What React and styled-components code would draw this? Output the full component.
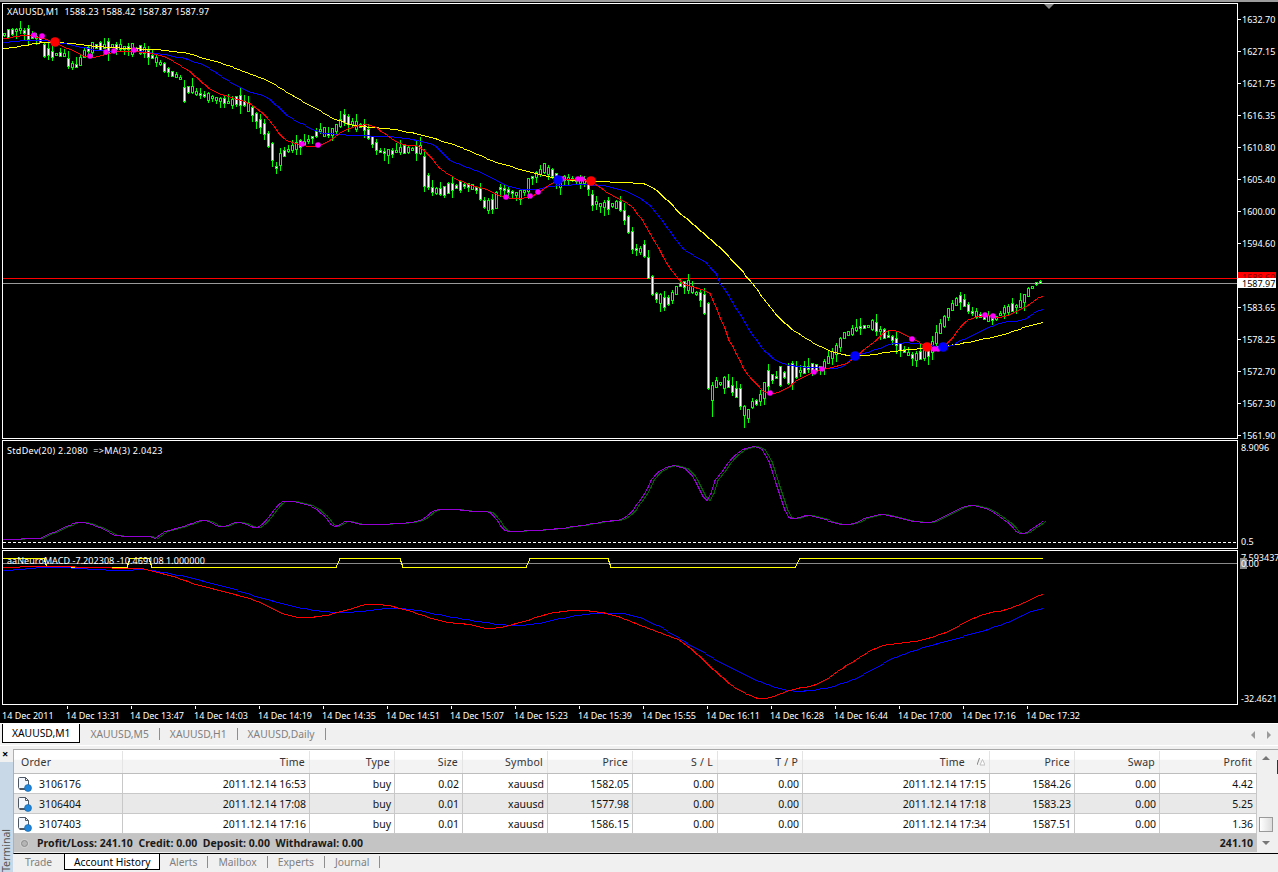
import React from 'react';
import styled, { createGlobalStyle } from 'styled-components';

const GlobalStyle = createGlobalStyle`
  html, body {
    margin: 0;
    padding: 0;
    background: #f0f0f0;
  }
  body {
    font-family: "Noto Sans", "Liberation Sans", sans-serif;
    font-size: 10.5px;
    overflow: hidden;
  }
`;

const Page = styled.div`
  width: 1278px;
  height: 872px;
  display: flex;
  flex-direction: column;
  overflow: hidden;
`;

const ChartWindow = styled.div`
  height: 723px;
  flex: none;
  box-sizing: border-box;
  background: #000;
  border-top: 2px solid #9c9c9c;
  padding: 1px 0 0 2px;
  display: flex;
  flex-direction: column;
  gap: 1px;
  color: #fff;
  font-size: 9px;
`;

const Pane = styled.div`
  display: flex;
  height: ${(p) => p.$height}px;
  flex: none;
`;

const Plot = styled.div`
  position: relative;
  width: 1236px;
  box-sizing: border-box;
  border: 1px solid #fff;
  flex: none;
  svg {
    display: block;
  }
`;

const ChartTitle = styled.div`
  position: absolute;
  left: 4px;
  top: ${(p) => p.$top}px;
  line-height: 12px;
  white-space: pre;
  letter-spacing: ${(p) => p.$tracking}px;
`;

const PriceAxis = styled.div`
  position: relative;
  flex: 1;
`;

const PriceRow = styled.div`
  height: 32px;
  display: flex;
  align-items: center;
  gap: 1px;
  &::before {
    content: '';
    width: 3px;
    height: 1px;
    background: #fff;
  }
`;

const PriceTag = styled.div`
  position: absolute;
  left: 0;
  width: 38px;
  top: ${(p) => p.$top}px;
  height: ${(p) => p.$height}px;
  line-height: 11px;
  padding-left: 4px;
  box-sizing: border-box;
  overflow: hidden;
  background: ${(p) => p.$bg};
  color: ${(p) => p.$color};
`;

const ScaleAxis = styled.div`
  position: relative;
  flex: 1;
  display: flex;
  flex-direction: column;
  justify-content: space-between;
  padding: ${(p) => p.$pad};
  line-height: 11px;
  white-space: nowrap;
  overflow: hidden;
  padding-left: 3px;
`;

const ZeroTag = styled.span`
  position: absolute;
  left: 2px;
  top: 8px;
  line-height: 11px;
  padding-left: 1px;
  background: linear-gradient(90deg, #8a8a8a 7px, transparent 7px);
`;

const TimeAxis = styled.div`
  display: flex;
  height: 17px;
  flex: none;
`;

const TimeCell = styled.div`
  width: 64px;
  flex: none;
  white-space: nowrap;
  line-height: 12px;
  &::before {
    content: '';
    display: block;
    width: 1px;
    height: 3px;
    margin-left: 1px;
    margin-bottom: 1px;
    background: ${(p) => (p.$first ? 'transparent' : '#fff')};
  }
`;

const ChartTabs = styled.div`
  height: 23px;
  flex: none;
  box-sizing: border-box;
  border-top: 1px solid #fff;
  border-bottom: 1px solid #fff;
  background: #f0f0f0;
  display: flex;
  align-items: stretch;
  padding-left: 2px;
  font-size: 10.3px;
`;

const ChartTab = styled.div`
  display: flex;
  align-items: center;
  gap: 10px;
  padding: 0 0 0 10px;
  color: #808080;
  margin-bottom: 2px;
  &::after {
    content: '';
    width: 1px;
    height: 12px;
    background: #8e8e8e;
  }
  ${(p) =>
    p.$active &&
    `
    background: #fff;
    color: #000;
    padding: 0 9px;
    border-left: 1px solid #000;
    border-right: 1px solid #000;
    border-bottom: 1px solid #000;
    margin-bottom: 2px;
    &::after { display: none; }
  `}
`;

const Arrows = styled.div`
  margin-left: auto;
  display: flex;
  align-items: center;
  gap: 12px;
  padding-right: 7px;
`;

const Terminal = styled.div`
  flex: 1;
  display: flex;
  min-height: 0;
`;

const SideStrip = styled.div`
  width: 13px;
  flex: none;
  display: flex;
  flex-direction: column;
  margin-top: 2px;
`;

const CloseMark = styled.div`
  height: 14px;
  font-size: 11px;
  font-weight: 700;
  line-height: 11px;
  padding-left: 2px;
  color: #000;
  flex: none;
`;

const SideLabel = styled.div`
  flex: 1;
  background: #c8d8e6;
  color: #555;
  writing-mode: vertical-rl;
  transform: rotate(180deg);
  text-align: left;
  line-height: 13px;
  font-size: 10.5px;
`;

const Body = styled.div`
  position: relative;
  flex: 1;
  display: flex;
  flex-direction: column;
  padding-top: 3px;
  min-width: 0;
  &::after {
    content: '';
    position: absolute;
    right: 0;
    top: 14px;
    width: 1px;
    height: 14px;
    background: #333;
  }
`;

const TableArea = styled.div`
  display: flex;
  height: 103px;
  flex: none;
  border-top: 1px solid #a8a8a8;
  border-left: 1px solid #b0b0b0;
  border-bottom: 1px solid #000;
`;

const Table = styled.div`
  width: 1243px;
  flex: none;
`;

const columns = '109px 187px 85px 68px 85px 85px 85px 85px 187px 85px 85px 97px';

const HeaderRow = styled.div`
  display: grid;
  grid-template-columns: ${columns};
  height: 22px;
  padding-top: 1px;
  background: linear-gradient(#fff 0, #fff 40%, #f3f3f3 45%, #f3f3f3 100%);
  border-bottom: 1px solid #bdbdbd;
  box-shadow: 0 1px 0 #fff, 0 2px 0 #c8c8c8;
  color: #333;
  margin-bottom: 0;
  box-sizing: content-box;
`;

const HeaderCell = styled.div`
  display: flex;
  align-items: center;
  justify-content: ${(p) => (p.$left ? 'flex-start' : 'flex-end')};
  gap: 12px;
  padding: ${(p) => (p.$left ? '0 0 0 7px' : '0 4px 0 0')};
  border-right: 1px solid #e4e4e4;
  letter-spacing: 0.25px;
`;

const Row = styled.div`
  display: grid;
  grid-template-columns: ${columns};
  height: 20px;
  box-sizing: border-box;
  background: ${(p) => (p.$alt ? '#e9e9e9' : '#fff')};
  border-bottom: 1px solid #c8c8c8;
  color: #111;
`;

const Cell = styled.div`
  display: flex;
  align-items: center;
  justify-content: flex-end;
  padding-right: 3px;
  margin-left: -1px;
  border-right: 1px solid #c8c8c8;
  white-space: nowrap;
`;

const OrderCell = styled(Cell)`
  justify-content: flex-start;
  gap: 7px;
  padding-left: 3px;
  margin-left: 0;
`;

const Summary = styled.div`
  height: 18px;
  background: #c4c4c4;
  display: flex;
  align-items: center;
  font-weight: 700;
  color: #1a1a1a;
  white-space: pre;
  padding: 0 4px 0 7px;
  gap: 9px;
  letter-spacing: 0.03px;
`;

const SummaryTotal = styled.span`
  margin-left: auto;
`;

const StatusDot = styled.span`
  width: 5px;
  height: 5px;
  border-radius: 50%;
  background: #b5b5b5;
  border: 1px solid #8a8a8a;
  box-shadow: 0 0 0 1px #d0d0d0;
`;

const Scrollbar = styled.div`
  width: 18px;
  flex: none;
  background: #f0f0f0;
  display: flex;
  flex-direction: column;
  align-items: center;
  padding-top: 6px;
  box-sizing: border-box;
`;

const Thumb = styled.div`
  width: 14px;
  height: 15px;
  margin-top: 57px;
  margin-bottom: 9px;
  box-sizing: border-box;
  border: 1px solid #9a9a9a;
  background: linear-gradient(90deg, #fff, #dcdcdc);
`;

const BottomTabs = styled.div`
  flex: 1;
  display: flex;
  align-items: stretch;
  background: #f0f0f0;
  padding-left: 1px;
  font-size: 10.3px;
`;

const BottomTab = styled(ChartTab)`
  ${(p) => p.$plain && `width: 50px; box-sizing: border-box; padding-left: 11px; &::after { display: none; }`}
  ${(p) => p.$active && `padding-right: 8px;`}
`;

// control points read off the chart, in page pixels
const pricePath = [
  [3, 35], [12, 32], [19, 29], [26, 33], [35, 37], [43, 42], [44, 50], [52, 54], [66, 55], [68, 62],
  [75, 67], [80, 62], [84, 55], [90, 48], [100, 46], [118, 47], [145, 50], [150, 55], [160, 63], [170, 72],
  [183, 80], [184, 95], [190, 88], [200, 95], [213, 98], [230, 103], [240, 100], [250, 108], [257, 118], [265, 130],
  [272, 150], [277, 170], [282, 155], [290, 150], [298, 145], [305, 143], [312, 138], [320, 130], [330, 135], [345, 118],
  [355, 125], [365, 128], [372, 140], [380, 152], [390, 153], [400, 150], [423, 150], [424, 170], [432, 190], [442, 192],
  [450, 188], [470, 185], [480, 192], [485, 205], [495, 205], [500, 188], [520, 195], [527, 190], [530, 180], [545, 168],
  [555, 175], [560, 185], [565, 178], [585, 182], [590, 185], [592, 200], [600, 205], [620, 205], [623, 212], [628, 222],
  [635, 250], [645, 250], [650, 275], [655, 295], [665, 303], [670, 300], [680, 285], [688, 285], [695, 292], [703, 298],
  [707, 315], [711, 398], [715, 385], [727, 382], [735, 392], [740, 395], [743, 410], [748, 415], [752, 405], [757, 402],
  [763, 395], [768, 378], [775, 378], [785, 375], [795, 373], [810, 368], [822, 368], [835, 352], [845, 335], [860, 328],
  [875, 325], [885, 335], [895, 340], [905, 352], [915, 358], [930, 352], [940, 330], [950, 310], [960, 298], [972, 312],
  [985, 318], [995, 320], [1005, 310], [1020, 305], [1030, 290], [1037, 283], [1043, 282],
];

const yellowLine = [
  [3, 48], [50, 42], [110, 47], [167, 50], [200, 57], [267, 80], [320, 110], [350, 124], [400, 130], [450, 143],
  [500, 163], [560, 178], [620, 182], [650, 186], [680, 213], [720, 247], [750, 280], [780, 318], [810, 340], [835, 352],
  [860, 355], [900, 350], [950, 345], [1000, 335], [1043, 322],
];

const blueLine = [
  [3, 42], [30, 40], [50, 41], [100, 50], [150, 52], [200, 63], [240, 87], [267, 97], [287, 115], [320, 132],
  [400, 137], [433, 144], [450, 160], [483, 173], [510, 186], [533, 189], [557, 185], [600, 185], [627, 191], [650, 205],
  [667, 227], [683, 248], [707, 263], [720, 283], [757, 340], [780, 362], [813, 367], [840, 367], [855, 356], [880, 348],
  [893, 343], [920, 343], [943, 347], [960, 340], [1000, 323], [1020, 320], [1043, 309],
];

const redLine = [
  [3, 38], [30, 35], [55, 42], [67, 48], [90, 57], [113, 52], [133, 51], [160, 55], [183, 67], [213, 90],
  [250, 103], [267, 117], [283, 137], [300, 144], [320, 145], [345, 130], [370, 125], [400, 143], [420, 147], [443, 170],
  [467, 183], [483, 188], [507, 197], [530, 197], [538, 192], [558, 180], [590, 181], [607, 192], [633, 207], [650, 233],
  [667, 263], [683, 283], [710, 293], [720, 317], [729, 340], [747, 373], [770, 393], [813, 372], [847, 363], [867, 347],
  [890, 330], [910, 337], [930, 347], [945, 345], [965, 322], [985, 315], [1000, 317], [1020, 309], [1043, 296],
];

const smallDots = [
  [34, 35], [42, 36], [90, 56], [106, 52], [114, 51], [134, 50], [302, 144], [318, 145], [506, 197], [530, 196],
  [538, 192], [562, 179], [578, 179], [582, 179], [770, 393], [814, 372], [822, 369], [912, 339], [934, 349], [938, 349],
  [985, 315], [993, 316],
];
const bigRed = [[55, 42], [591, 181], [927, 347]];
const bigBlue = [[558, 180], [855, 356], [943, 347]];

const stdDevLine = [
  [3, 539], [40, 538], [42, 537], [50, 533], [70, 525], [80, 522], [100, 527], [115, 535], [150, 536], [155, 538],
  [165, 531], [180, 527], [205, 520], [220, 526], [240, 522], [258, 527], [270, 515], [280, 503], [290, 501], [310, 505],
  [320, 512], [335, 526], [345, 521], [365, 524], [400, 523], [420, 520], [435, 510], [450, 509], [475, 511], [490, 512],
  [505, 530], [530, 530], [560, 528], [600, 522], [625, 517], [640, 500], [655, 475], [670, 466], [685, 468], [695, 480],
  [707, 500], [715, 480], [735, 455], [750, 447], [762, 449], [772, 470], [785, 510], [792, 518], [810, 515], [845, 524],
  [880, 514], [905, 519], [930, 522], [950, 513], [970, 505], [990, 510], [1005, 520], [1020, 533], [1030, 530], [1043, 521],
];

const macdRed = [
  [3, 567], [45, 566], [130, 568], [150, 570], [200, 585], [250, 598], [290, 615], [320, 616], [345, 610], [370, 604],
  [400, 608], [440, 620], [470, 624], [490, 628], [520, 622], [550, 613], [580, 610], [610, 614], [640, 625], [680, 640],
  [700, 656], [720, 675], [740, 690], [762, 698], [790, 690], [820, 682], [850, 663], [880, 646], [920, 640], [950, 630],
  [980, 615], [1010, 608], [1043, 594],
];

const macdBlue = [
  [3, 570], [50, 567], [120, 570], [150, 570], [220, 585], [290, 605], [340, 612], [400, 608], [460, 618], [520, 625],
  [580, 615], [620, 613], [650, 622], [700, 650], [740, 672], [780, 688], [810, 690], [850, 680], [900, 655], [950, 640],
  [1000, 625], [1043, 608],
];

const macdSteps = [
  [3, 558], [44, 558], [47, 567], [127, 567], [130, 558], [149, 558], [152, 567], [336, 567], [340, 558], [400, 558],
  [403, 567], [526, 567], [530, 558], [608, 558], [611, 567], [795, 567], [800, 558], [1043, 558],
];

const smooth = (line) => {
  const out = [];
  for (let i = 0; i < line.length - 1; i += 1) {
    const p0 = line[Math.max(i - 1, 0)];
    const p1 = line[i];
    const p2 = line[i + 1];
    const p3 = line[Math.min(i + 2, line.length - 1)];
    const steps = Math.max(1, Math.round((p2[0] - p1[0]) / 4));
    for (let s = 0; s < steps; s += 1) {
      const t = s / steps;
      const y =
        0.5 *
        (2 * p1[1] +
          (p2[1] - p0[1]) * t +
          (2 * p0[1] - 5 * p1[1] + 4 * p2[1] - p3[1]) * t * t +
          (3 * p1[1] - p0[1] - 3 * p2[1] + p3[1]) * t * t * t);
      out.push([Math.round(p1[0] + (p2[0] - p1[0]) * t), Math.round(y)]);
    }
  }
  out.push(line[line.length - 1]);
  return out;
};

const toPoints = (line, dx = 0) => line.map(([x, y]) => `${x + dx},${y + 0.5}`).join(' ');

const yAt = (x) => {
  for (let i = 1; i < pricePath.length; i += 1) {
    const [x1, y1] = pricePath[i];
    if (x <= x1) {
      const [x0, y0] = pricePath[i - 1];
      return y0 + ((y1 - y0) * (x - x0)) / (x1 - x0);
    }
  }
  return pricePath[pricePath.length - 1][1];
};

const noise = (i, k) => {
  const v = Math.sin(i * 12.9898 + k * 78.233) * 43758.5453;
  return v - Math.floor(v);
};

const makeCandles = () => {
  const bars = [];
  for (let i = 0; i * 4 + 3 <= 1040; i += 1) {
    const x = i * 4 + 3;
    const mid = yAt(x + 1.5);
    const slope = yAt(x + 4) - yAt(x);
    const wild = x > 710 && x < 800 ? 2 : 1;
    let size = 3 + noise(i, 4) * noise(i, 4) * 9 * wild;
    let down = noise(i, 1) > 0.5;
    if (Math.abs(slope) > 4) {
      size = Math.abs(slope) + 3;
      down = slope > 0;
    }
    if (x > 1030) size = 3;
    const top = Math.round(mid - size / 2);
    const height = Math.round(size);
    const tail = x > 1030 ? 1 : 8;
    let high = top - Math.round(noise(i, 2) * noise(i, 2) * tail);
    let low = top + height + Math.round(noise(i, 3) * noise(i, 3) * tail);
    if (x === 743) low = 428;
    if (x === 711) low = 417;
    bars.push({ x, top, height, high, low, down });
  }
  return bars;
};

const candles = makeCandles();

const Candles = () => (
  <g shapeRendering="crispEdges">
    {candles.map((c) => (
      <g key={c.x}>
        <rect x={c.x + 1} y={c.high} width="1" height={c.low - c.high} fill="#00ff00" />
        <rect x={c.x} y={c.top} width="3" height={c.height} fill="#00ff00" />
        {c.height > 2 && (
          <rect x={c.x + 1} y={c.top + 1} width="1" height={c.height - 2} fill={c.down ? '#fff' : '#000'} />
        )}
      </g>
    ))}
  </g>
);

const Line = ({ line, color, dx }) => (
  <polyline points={toPoints(line, dx)} fill="none" stroke={color} strokeWidth="1" shapeRendering="crispEdges" />
);

const Dots = ({ dots, r, color }) =>
  dots.map(([x, y]) => <circle key={`${x}-${y}`} cx={x} cy={y} r={r} fill={color} />);

const MainChart = () => (
  <svg width="1234" height="434" viewBox="3 4 1234 434">
    <polygon points="1044,4 1054,4 1049,9" fill="#8a8a8a" />
    <rect x="3" y="278" width="1234" height="1" fill="#ff0000" />
    <rect x="3" y="283" width="1234" height="1" fill="#9a9a9a" />
    <Candles />
    <Line line={smooth(yellowLine)} color="#ffff00" />
    <Line line={smooth(blueLine)} color="#0000ff" />
    <Line line={smooth(redLine)} color="#ff0000" />
    <Dots dots={smallDots} r={2.8} color="#ff00ff" />
    <Dots dots={bigRed} r={4.8} color="#ff0000" />
    <Dots dots={bigBlue} r={4.8} color="#0000ff" />
  </svg>
);

const StdDevChart = () => (
  <svg width="1234" height="107" viewBox="3 441 1234 107">
    <line x1="3" y1="542.5" x2="1237" y2="542.5" stroke="#fff" strokeDasharray="3 2" shapeRendering="crispEdges" />
    <Line line={smooth(stdDevLine)} color="#006400" dx={3} />
    <Line line={smooth(stdDevLine)} color="#9400d3" />
  </svg>
);

const MacdChart = () => (
  <svg width="1234" height="153" viewBox="3 551 1234 153">
    <rect x="3" y="563" width="1234" height="1" fill="#8a8a8a" />
    <Line line={macdSteps} color="#ffff00" />
    <Line line={smooth(macdBlue)} color="#0000ff" />
    <Line line={smooth(macdRed)} color="#ff0000" />
  </svg>
);

const OrderIcon = () => (
  <svg width="15" height="16" viewBox="0 0 15 16">
    <path d="M1.5 2q0-1 1-1h6l3 3v8h-9q-1 0-1-1z" transform="translate(0 .5)" fill="#f4f8fc" stroke="#4d5864" />
    <path d="M8.5 1.5v3h3" fill="none" stroke="#4d5864" />
    <path d="M2.5 13.5h7" stroke="#4d5864" />
    <circle cx="11" cy="12" r="3.5" fill="#1f86dc" stroke="#14609f" strokeWidth=".6" />
  </svg>
);

const Triangle = ({ up }) => (
  <svg width="8" height="4" viewBox="0 0 8 4">
    <polygon points={up ? '4,0 8,4 0,4' : '0,0 8,0 4,4'} fill="#777" />
  </svg>
);

const ArrowSide = ({ right }) => (
  <svg width="4" height="8" viewBox="0 0 4 8">
    <polygon points={right ? '0,0 4,4 0,8' : '4,0 0,4 4,8'} fill="#9a9a9a" />
  </svg>
);

const SortMark = () => (
  <svg width="8" height="8" viewBox="0 0 8 8">
    <path d="M2.5 0L0 7" stroke="#888" fill="none" />
    <path d="M5.5 1.5L8 7H3z" fill="#fff" stroke="#c0c0c0" />
  </svg>
);

const prices = [
  '1632.70', '1627.15', '1621.75', '1616.35', '1610.80', '1605.40', '1600.00',
  '1594.60', '1589.05', '1583.65', '1578.25', '1572.70', '1567.30', '1561.90',
];

const times = [
  '14 Dec 2011', '14 Dec 13:31', '14 Dec 13:47', '14 Dec 14:03', '14 Dec 14:19', '14 Dec 14:35',
  '14 Dec 14:51', '14 Dec 15:07', '14 Dec 15:23', '14 Dec 15:39', '14 Dec 15:55', '14 Dec 16:11',
  '14 Dec 16:28', '14 Dec 16:44', '14 Dec 17:00', '14 Dec 17:16', '14 Dec 17:32',
];

const headers = ['Time', 'Type', 'Size', 'Symbol', 'Price', 'S / L', 'T / P', 'Time', 'Price', 'Swap', 'Profit'];

const orders = [
  ['3106176', '2011.12.14 16:53', 'buy', '0.02', 'xauusd', '1582.05', '0.00', '0.00', '2011.12.14 17:15', '1584.26', '0.00', '4.42'],
  ['3106404', '2011.12.14 17:08', 'buy', '0.01', 'xauusd', '1577.98', '0.00', '0.00', '2011.12.14 17:18', '1583.23', '0.00', '5.25'],
  ['3107403', '2011.12.14 17:16', 'buy', '0.01', 'xauusd', '1586.15', '0.00', '0.00', '2011.12.14 17:34', '1587.51', '0.00', '1.36'],
];

const App = () => (
  <Page>
    <GlobalStyle />
    <ChartWindow>
      <Pane $height={436}>
        <Plot>
          <MainChart />
          <ChartTitle $top={2} $tracking={0.15}>XAUUSD,M1  1588.23 1588.42 1587.87 1587.97</ChartTitle>
        </Plot>
        <PriceAxis>
          {prices.map((p) => (
            <PriceRow key={p}>{p}</PriceRow>
          ))}
          <PriceTag $top={269} $height={6} $bg="#ff0000" $color="#800000">1588.60</PriceTag>
          <PriceTag $top={275} $height={10} $bg="#fff" $color="#000">1587.97</PriceTag>
        </PriceAxis>
      </Pane>
      <Pane $height={109}>
        <Plot>
          <StdDevChart />
          <ChartTitle $top={4} $tracking={0.3}>StdDev(20) 2.2080  =&gt;MA(3) 2.0423</ChartTitle>
        </Plot>
        <ScaleAxis $pad="2px 0 2px">
          <span>8.9096</span>
          <span>0.5</span>
        </ScaleAxis>
      </Pane>
      <Pane $height={155}>
        <Plot>
          <MacdChart />
          <ChartTitle $top={4} $tracking={0.05}>aaNeuroMACD -7.202308 -10.469108 1.000000</ChartTitle>
        </Plot>
        <ScaleAxis $pad="2px 0 1px">
          <span>7.593437</span>
          <ZeroTag>0.00</ZeroTag>
          <span>-32.4621</span>
        </ScaleAxis>
      </Pane>
      <TimeAxis>
        {times.map((t, i) => (
          <TimeCell key={t} $first={i === 0}>
            {t}
          </TimeCell>
        ))}
      </TimeAxis>
    </ChartWindow>
    <ChartTabs>
      <ChartTab $active>XAUUSD,M1</ChartTab>
      <ChartTab>XAUUSD,M5</ChartTab>
      <ChartTab>XAUUSD,H1</ChartTab>
      <ChartTab>XAUUSD,Daily</ChartTab>
      <Arrows>
        <ArrowSide />
        <ArrowSide right />
      </Arrows>
    </ChartTabs>
    <Terminal>
      <SideStrip>
        <CloseMark>×</CloseMark>
        <SideLabel>Terminal</SideLabel>
      </SideStrip>
      <Body>
        <TableArea>
          <Table>
            <HeaderRow>
              <HeaderCell $left>Order</HeaderCell>
              {headers.map((h, i) => (
                <HeaderCell key={`${h}-${i}`}>
                  {h}
                  {i === 7 && <SortMark />}
                </HeaderCell>
              ))}
            </HeaderRow>
            {orders.map((order, i) => (
              <Row key={order[0]} $alt={i === 1}>
                <OrderCell>
                  <OrderIcon />
                  {order[0]}
                </OrderCell>
                {order.slice(1).map((value, j) => (
                  <Cell key={j}>{value}</Cell>
                ))}
              </Row>
            ))}
            <Summary>
              <StatusDot />
              Profit/Loss: 241.10  Credit: 0.00  Deposit: 0.00  Withdrawal: 0.00
              <SummaryTotal>241.10</SummaryTotal>
            </Summary>
          </Table>
          <Scrollbar>
            <Triangle up />
            <Thumb />
            <Triangle />
          </Scrollbar>
        </TableArea>
        <BottomTabs>
          <BottomTab $plain>Trade</BottomTab>
          <BottomTab $active>Account History</BottomTab>
          <BottomTab>Alerts</BottomTab>
          <BottomTab>Mailbox</BottomTab>
          <BottomTab>Experts</BottomTab>
          <BottomTab>Journal</BottomTab>
        </BottomTabs>
      </Body>
    </Terminal>
  </Page>
);

export default App;
